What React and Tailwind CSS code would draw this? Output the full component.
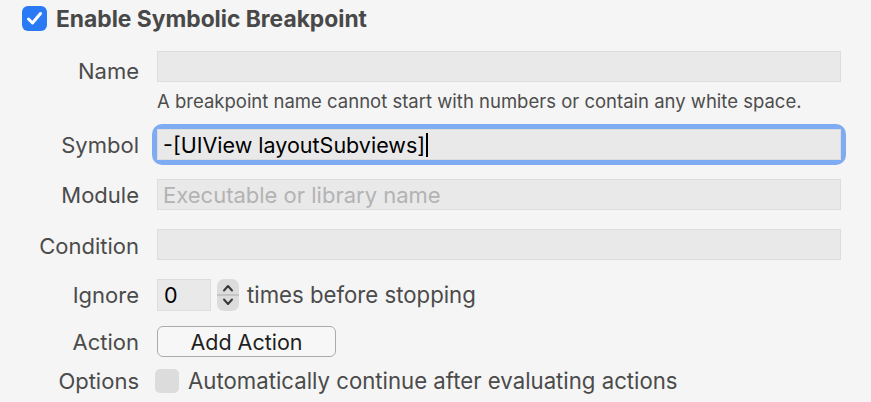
import React from 'react';

const FONT = { fontFamily: 'Inter, "Noto Sans", "Liberation Sans", sans-serif' };

const Label = ({ children, className = '' }) => (
  <div className={`w-[139px] shrink-0 text-right text-[22px] leading-[24px] text-[#4b4b4b] ${className}`}>{children}</div>
);

const Field = ({ children, placeholder }) => (
  <div className="w-[684px] h-[31px] bg-[#e9e9e9] border border-[#dddddd] flex items-center px-[5px] text-[21.5px] leading-[24px] text-black">
    {children}
    {placeholder && <span className="text-[#b3b3b3] text-[22px]">{placeholder}</span>}
  </div>
);

const Stepper = () => (
  <div className="w-[22px] h-[32px] rounded-[7px] bg-[#dcdcdc] flex flex-col items-center justify-between py-[5px] relative">
    <svg width="12" height="8" viewBox="0 0 12 8">
      <path d="M2 6.5 L6 2 L10 6.5" fill="none" stroke="#3a3a3a" strokeWidth="2" strokeLinecap="round" strokeLinejoin="round" />
    </svg>
    <div className="absolute left-0 right-0 top-[15px] h-[2px] bg-[#c4c4c4]" />
    <svg width="12" height="8" viewBox="0 0 12 8">
      <path d="M2 1.5 L6 6 L10 1.5" fill="none" stroke="#3a3a3a" strokeWidth="2" strokeLinecap="round" strokeLinejoin="round" />
    </svg>
  </div>
);

export default function App() {
  return (
    <div className="w-[871px] h-[402px] bg-[#f5f5f5] overflow-hidden" style={FONT}>
      {/* header */}
      <div className="flex items-center pl-[22px] h-[37px]">
        <div className="w-[25px] h-[25px] rounded-[6px] bg-[#2a7af6] flex items-center justify-center">
          <svg width="17" height="15" viewBox="0 0 17 15">
            <path d="M2.5 8 L6.5 12 L14.5 2.5" fill="none" stroke="white" strokeWidth="3" strokeLinecap="round" strokeLinejoin="round" />
          </svg>
        </div>
        <div className="ml-[9px] text-[22.8px] leading-[26px] font-bold text-[#484848]">Enable Symbolic Breakpoint</div>
      </div>

      {/* name */}
      <div className="flex items-start mt-[14px]">
        <Label className="mt-[8px]">Name</Label>
        <div className="ml-[18px]">
          <Field />
          <div className="mt-[8px] text-[18.5px] text-[#4d4d4d] leading-[22px]">
            A breakpoint name cannot start with numbers or contain any white space.
          </div>
        </div>
      </div>

      {/* symbol */}
      <div className="flex items-center mt-[17px] h-[31px]">
        <Label>Symbol</Label>
        <div className="ml-[18px] rounded-[5px] shadow-[0_0_0_5px_#7eabf1]">
          <Field>
            <span>-[UIView layoutSubviews]</span>
            <span className="w-[2px] h-[24px] bg-black ml-[1px]" />
          </Field>
        </div>
      </div>

      {/* module */}
      <div className="flex items-center mt-[19px] h-[31px]">
        <Label>Module</Label>
        <div className="ml-[18px]">
          <Field placeholder="Executable or library name" />
        </div>
      </div>

      {/* condition */}
      <div className="flex items-center mt-[19px] h-[31px]">
        <Label className="mt-[3px]">Condition</Label>
        <div className="ml-[18px]">
          <Field />
        </div>
      </div>

      {/* ignore */}
      <div className="flex items-center mt-[19px] h-[32px]">
        <Label>Ignore</Label>
        <div className="ml-[18px] flex items-center">
          <div className="w-[54px] h-[32px] bg-[#e9e9e9] border border-[#dddddd] flex items-center px-[6px] text-[21.5px] text-black">0</div>
          <div className="ml-[6px]"><Stepper /></div>
          <div className="ml-[8px] text-[22.2px] leading-[24px] text-[#4b4b4b]">times before stopping</div>
        </div>
      </div>

      {/* action */}
      <div className="flex items-center mt-[15px] h-[31px]">
        <Label>Action</Label>
        <div className="ml-[18px]">
          <div className="w-[179px] h-[31px] rounded-[6px] border-[1.5px] border-[#ababab] bg-[#f7f7f7] flex items-center justify-center text-[21.5px] leading-[24px] text-[#1f1f1f]">
            Add Action
          </div>
        </div>
      </div>

      {/* options */}
      <div className="flex items-center mt-[12px] h-[24px]">
        <Label>Options</Label>
        <div className="ml-[16px] flex items-center">
          <div className="w-[24px] h-[24px] rounded-[5px] bg-[#dcdcdc]" />
          <div className="ml-[9px] text-[22.2px] leading-[24px] text-[#4b4b4b]">Automatically continue after evaluating actions</div>
        </div>
      </div>
    </div>
  );
}
